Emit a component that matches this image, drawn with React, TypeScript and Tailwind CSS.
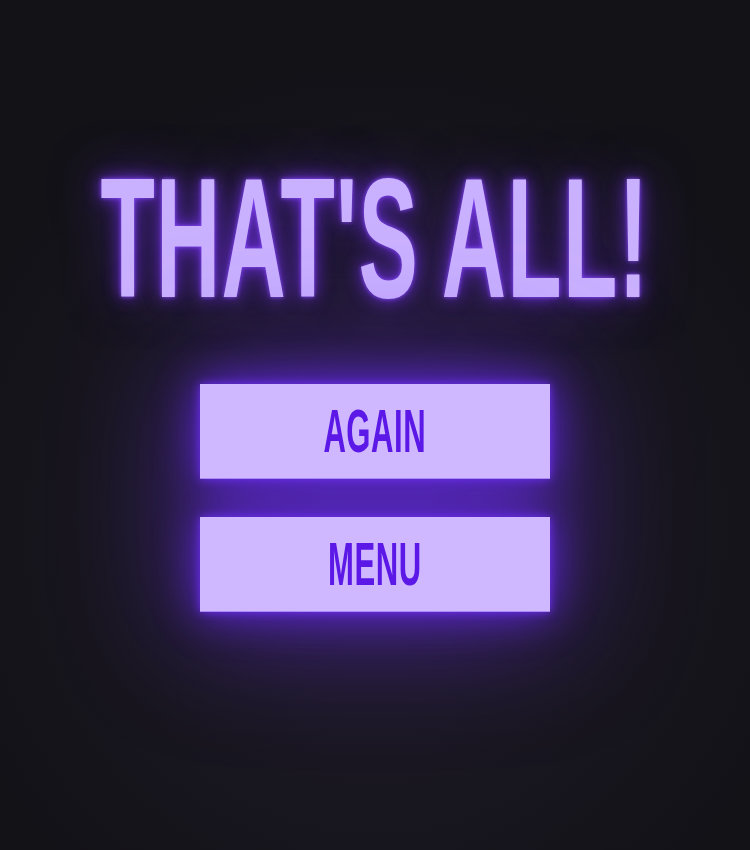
const MenuButton = ({ label }: { label: string }) => {
    return (
        <button className="w-[350px] h-[95px] bg-[#cfb8ff] border-b border-[#a98af5] flex items-center justify-center">
            <span className="inline-block whitespace-nowrap text-[61px] leading-none font-bold tracking-[1px] text-[#5b18e6] scale-x-[0.51]">
                {label}
            </span>
        </button>
    )
}

export default function App() {
    return (
        <div className="w-[750px] h-[850px] overflow-hidden bg-[#131217] bg-[radial-gradient(ellipse_60%_55%_at_50%_62%,#221c2e_0%,#18161f_60%,#131217_100%)] font-['Liberation_Sans',Arial,sans-serif]">
            <div className="flex flex-col items-center pt-[153px]">
                <h1 className="inline-block whitespace-nowrap text-[170px] leading-none font-bold tracking-[2.5px] text-[#cab1ff] scale-x-[0.523] [text-shadow:0_0_6px_#8a4dff,0_0_24px_#6d2ee0,0_0_70px_rgba(100,45,210,0.7)]">
                    THAT'S ALL!
                </h1>
                <div className="flex flex-col gap-[38px] mt-[61px] [filter:drop-shadow(0_0_5px_#6d2ff0)_drop-shadow(0_0_20px_rgba(98,40,225,0.9))_drop-shadow(0_0_60px_rgba(95,42,210,0.75))]">
                    <MenuButton label="AGAIN" />
                    <MenuButton label="MENU" />
                </div>
            </div>
        </div>
    )
}
